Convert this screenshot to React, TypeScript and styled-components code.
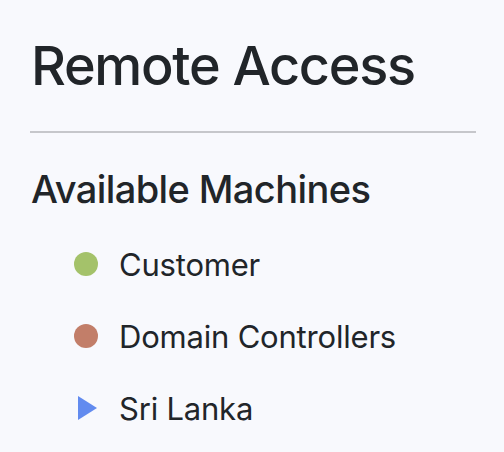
import React from 'react';
import styled, { createGlobalStyle } from 'styled-components';

const GlobalStyle = createGlobalStyle`
  html, body {
    margin: 0;
    padding: 0;
    background: #f8f9fd;
  }
`;

const Page = styled.div`
  min-height: 452px;
  box-sizing: border-box;
  padding: 34px 28px 0 30px;
  font-family: Inter, 'Liberation Sans', Arial, sans-serif;
  color: #212529;
`;

const Title = styled.h1`
  margin: 0;
  padding-left: 1px;
  font-size: 54px;
  line-height: 64px;
  font-weight: 500;
  letter-spacing: -1.3px;
`;

const Divider = styled.hr`
  margin: 33px 0 0;
  border: none;
  height: 2px;
  background: #c6c7cb;
`;

const SectionTitle = styled.h2`
  margin: 32px 0 0;
  padding-left: 1px;
  font-size: 38px;
  line-height: 48px;
  font-weight: 500;
  letter-spacing: -0.6px;
`;

const MachineList = styled.ul`
  list-style: none;
  margin: 15px 0 0;
  padding: 0 0 0 44px;
`;

const MachineRow = styled.li`
  display: flex;
  align-items: center;
  gap: 21px;
  height: 72px;
  font-size: 31px;
  line-height: 1;
  letter-spacing: -0.2px;
`;

const Dot = styled.span<{ $color: string }>`
  width: 24px;
  height: 24px;
  border-radius: 50%;
  background: ${(p) => p.$color};
  flex-shrink: 0;
`;

const Arrow = styled.svg`
  width: 24px;
  height: 24px;
  flex-shrink: 0;
  display: block;
`;

type Machine = { name: string; kind: 'dot' | 'group'; color: string };

const machines: Machine[] = [
  { name: 'Customer', kind: 'dot', color: '#a4c26a' },
  { name: 'Domain Controllers', kind: 'dot', color: '#c27e69' },
  { name: 'Sri Lanka', kind: 'group', color: '#628bef' },
];

const App = () => {
  return (
    <Page>
      <GlobalStyle />
      <Title>Remote Access</Title>
      <Divider />
      <SectionTitle>Available Machines</SectionTitle>
      <MachineList>
        {machines.map((m) => (
          <MachineRow key={m.name}>
            {m.kind === 'dot' ? (
              <Dot $color={m.color} />
            ) : (
              <Arrow viewBox="0 0 24 24">
                <polygon points="4,0 23,12 4,24" fill={m.color} />
              </Arrow>
            )}
            <span>{m.name}</span>
          </MachineRow>
        ))}
      </MachineList>
    </Page>
  );
};

export default App;
